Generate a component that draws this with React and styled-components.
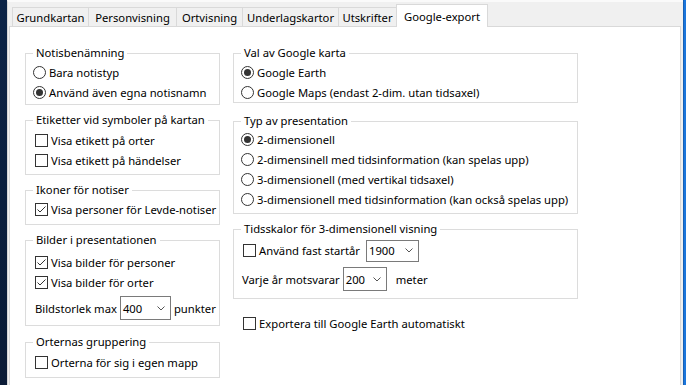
import React from "react";
import styled, { createGlobalStyle } from "styled-components";

const Global = createGlobalStyle`
  html, body { margin: 0; padding: 0; width: 686px; height: 385px; overflow: hidden; background: #f0f0f0; }
  body { font-family: "Noto Sans", "Open Sans", sans-serif; font-size: 11.25px; color: #000; }
  * { box-sizing: border-box; }
`;

const Screen = styled.div`
  display: flex;
  width: 686px;
  height: 385px;
  overflow: hidden;
`;

const Desktop = styled.div`
  width: 7px;
  flex: none;
  background: linear-gradient(180deg, #0c2447 0%, #0a1b36 100%);
`;

const Window = styled.div`
  flex: 1;
  min-width: 0;
  display: flex;
  flex-direction: column;
  background: #f0f0f0;
  border-left: 1px solid #d6d6d6;
  border-top: 2px solid #fafafa;
  padding: 2px 2px 0 1px;
`;

const AccentEdge = styled.div`
  width: 3px;
  flex: none;
  background: #1b76dc;
  border-left: 1px solid #1660b5;
`;

const TabBar = styled.div`
  display: flex;
  align-items: flex-end;
  height: 22px;
  padding-left: 3px;
  flex: none;
`;

const Tab = styled.div`
  display: flex;
  align-items: center;
  justify-content: center;
  width: ${(p) => p.$w}px;
  height: ${(p) => (p.$active ? 23 : 19)}px;
  margin-left: ${(p) => (p.$first ? 0 : -1)}px;
  margin-bottom: ${(p) => (p.$active ? -1 : 0)}px;
  border: 1px solid #d9d9d9;
  border-bottom: none;
  background: ${(p) => (p.$active ? "#fff" : "#f0f0f0")};
  position: relative;
  z-index: ${(p) => (p.$active ? 1 : 0)};
  padding-top: ${(p) => (p.$active ? 0 : 1)}px;
  white-space: nowrap;
`;

const Panel = styled.div`
  flex: 1;
  background: #fff;
  border: 1px solid #d9d9d9;
  border-bottom: none;
  padding: 19px 0 0 15px;
  display: flex;
  gap: 13px;
  align-items: flex-start;
`;

const Column = styled.div`
  display: flex;
  flex-direction: column;
  width: ${(p) => p.$w}px;
  flex: none;
`;

const Group = styled.fieldset`
  margin: ${(p) => p.$mt || 0}px 0 0 0;
  padding: ${(p) => p.$pt || 0}px 0 ${(p) => p.$pb || 0}px 0;
  border: 1px solid #dcdcdc;
  min-width: 0;
`;

const Legend = styled.legend`
  margin-left: 7px;
  padding: 0 3px;
  line-height: 14px;
  white-space: nowrap;
`;

const Row = styled.label`
  display: flex;
  align-items: center;
  height: ${(p) => p.$h || 20}px;
  margin-top: ${(p) => p.$mt || 0}px;
  padding-left: ${(p) => p.$pl || 0}px;
  gap: ${(p) => p.$gap ?? 3}px;
  white-space: nowrap;
`;

const RadioMark = styled.span`
  width: 13px;
  height: 13px;
  flex: none;
  border: 1px solid #333;
  border-radius: 50%;
  background: #fff;
  display: flex;
  align-items: center;
  justify-content: center;
  &::after {
    content: "";
    width: 7px;
    height: 7px;
    border-radius: 50%;
    background: ${(p) => (p.$on ? "#333" : "transparent")};
  }
`;

const CheckBox = styled.span`
  width: 13px;
  height: 13px;
  flex: none;
  border: 1px solid #333;
  background: #fff;
  display: flex;
  align-items: center;
  justify-content: center;
`;

const Combo = styled.div`
  display: flex;
  align-items: center;
  justify-content: space-between;
  width: ${(p) => p.$w}px;
  height: ${(p) => p.$h}px;
  border: 1px solid #7a7a7a;
  background: #fff;
  padding: 0 5px 0 2px;
  flex: none;
`;

const Gap = styled.span`
  display: inline-block;
  width: ${(p) => p.$w}px;
`;

const Radio = ({ on, label, pl = 7 }) => (
  <Row $pl={pl}>
    <RadioMark $on={on} />
    <span>{label}</span>
  </Row>
);

const Check = ({ on, label, pl = 9, mt }) => (
  <Row $pl={pl} $mt={mt}>
    <CheckBox>
      {on && (
        <svg width="11" height="11" viewBox="0 0 11 11">
          <path d="M1.5 5.5 L4 8 L9.5 2.5" fill="none" stroke="#333" strokeWidth="1" />
        </svg>
      )}
    </CheckBox>
    <span>{label}</span>
  </Row>
);

const Select = ({ value, w, h }) => (
  <Combo $w={w} $h={h}>
    <span>{value}</span>
    <svg width="8" height="5" viewBox="0 0 8 5">
      <path d="M0.5 0.5 L4 4 L7.5 0.5" fill="none" stroke="#555" strokeWidth="1" />
    </svg>
  </Combo>
);

const tabs = [
  { label: "Grundkartan", w: 77 },
  { label: "Personvisning", w: 89 },
  { label: "Ortvisning", w: 67 },
  { label: "Underlagskartor", w: 97 },
  { label: "Utskrifter", w: 59 },
  { label: "Google-export", w: 92, active: true },
];

export default function App() {
  return (
    <>
      <Global />
      <Screen>
        <Desktop />
        <Window>
          <TabBar>
            {tabs.map((t, i) => (
              <Tab key={t.label} $w={t.w} $active={t.active} $first={i === 0}>
                {t.label}
              </Tab>
            ))}
          </TabBar>
          <Panel>
            <Column $w={195}>
              <Group $pt={2} $pb={2}>
                <Legend>Notisbenämning</Legend>
                <Radio label="Bara notistyp" />
                <Radio on label="Använd även egna notisnamn" />
              </Group>
              <Group $mt={8} $pt={3} $pb={4}>
                <Legend>Etiketter vid symboler på kartan</Legend>
                <Check label="Visa etikett på orter" />
                <Check label="Visa etikett på händelser" />
              </Group>
              <Group $mt={8} $pt={2} $pb={5}>
                <Legend>Ikoner för notiser</Legend>
                <Check on label="Visa personer för Levde-notiser" />
              </Group>
              <Group $mt={8} $pt={5} $pb={4}>
                <Legend>Bilder i presentationen</Legend>
                <Check on label="Visa bilder för personer" />
                <Check on label="Visa bilder för orter" />
                <Row $pl={9} $h={26} $mt={3}>
                  <span>Bildstorlek max</span>
                  <Select value="400" w={51} h={24} />
                  <span>punkter</span>
                </Row>
              </Group>
              <Group $mt={9} $pt={3} $pb={5}>
                <Legend>Orternas gruppering</Legend>
                <Check label="Orterna för sig i egen mapp" />
              </Group>
            </Column>
            <Column $w={345}>
              <Group $pt={2} $pb={0}>
                <Legend>Val av Google karta</Legend>
                <Radio on label="Google Earth" />
                <Radio label="Google Maps (endast 2-dim. utan tidsaxel)" />
              </Group>
              <Group $mt={11} $pt={1} $pb={4}>
                <Legend>Typ av presentation</Legend>
                <Radio on label="2-dimensionell" />
                <Radio label="2-dimensinell med tidsinformation (kan spelas upp)" />
                <Radio label="3-dimensionell (med vertikal tidsaxel)" />
                <Radio label="3-dimensionell med tidsinformation (kan också spelas upp)" />
              </Group>
              <Group $mt={8} $pt={4} $pb={7}>
                <Legend>Tidsskalor för 3-dimensionell visning</Legend>
                <Row $pl={9} $h={21} $gap={0}>
                  <CheckBox />
                  <Gap $w={3} />
                  <span>Använd fast startår</span>
                  <Gap $w={6} />
                  <Select value="1900" w={53} h={22} />
                </Row>
                <Row $pl={8} $h={24} $mt={6} $gap={0}>
                  <span>Varje år motsvarar</span>
                  <Gap $w={3} />
                  <Select value="200" w={44} h={24} />
                  <Gap $w={9} />
                  <span>meter</span>
                </Row>
              </Group>
              <Check pl={10} mt={14} label="Exportera till Google Earth automatiskt" />
            </Column>
          </Panel>
        </Window>
        <AccentEdge />
      </Screen>
    </>
  );
}
